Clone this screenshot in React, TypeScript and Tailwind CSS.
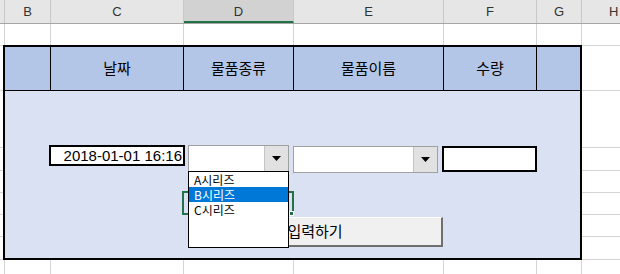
const cols = [
  { key: 'A', w: 'w-[5px]' },
  { key: 'B', w: 'w-[46px]' },
  { key: 'C', w: 'w-[133px]' },
  { key: 'D', w: 'w-[110px]' },
  { key: 'E', w: 'w-[150px]' },
  { key: 'F', w: 'w-[93px]' },
  { key: 'G', w: 'w-[45px]' },
];

const headCells = [
  { w: 'w-[46px]', label: '' },
  { w: 'w-[133px]', label: '날짜' },
  { w: 'w-[110px]', label: '물품종류' },
  { w: 'w-[150px]', label: '물품이름' },
  { w: 'w-[93px]', label: '수량' },
];

const sideRows = ['h-[57px]', 'h-[23px]', 'h-[22px]', 'h-[22px]', 'h-[22px]', 'h-[23px]'];

const KR = { fontFamily: '"Noto Sans CJK KR", "Liberation Sans", sans-serif' };

function Arrow() {
  return (
    <svg width="9" height="5" viewBox="0 0 9 5">
      <polygon points="0,0 9,0 4.5,5" fill="#000" />
    </svg>
  );
}

function Combo({ className }: { className: string }) {
  return (
    <div className={`absolute flex border border-[#a0a0a0] bg-white ${className}`}>
      <div className="flex-1" />
      <div className="w-[24px] bg-[#e1e1e1] border-l border-[#c4c4c4] flex items-center justify-center">
        <Arrow />
      </div>
    </div>
  );
}

function SideColumn({ w }: { w: string }) {
  return (
    <div className={`${w} flex flex-col`}>
      <div className="h-[46px] border-y border-[#d4d4d4]" />
      {sideRows.map((h, i) => (
        <div key={i} className={`${h} border-b border-[#d4d4d4]`} />
      ))}
    </div>
  );
}

export default function App() {
  return (
    <div className="relative w-[620px] h-[274px] overflow-hidden bg-white" style={{ fontFamily: '"Liberation Sans", sans-serif' }}>
      {/* column letters */}
      <div className="flex h-[24px] bg-[#e6e6e6] border-b border-[#a6a6a6] text-[13px] text-[#333]">
        {cols.map((c) => (
          <div
            key={c.key}
            className={`${c.w} shrink-0 flex items-center justify-center border-r border-[#c8c8c8] ${
              c.key === 'D' ? 'bg-[#d2d2d2] border-b-2 border-b-[#217346] pt-[2px]' : ''
            }`}
          >
            {c.key === 'A' ? '' : c.key}
          </div>
        ))}
        <div className="flex-1 pl-[27px] flex items-center">H</div>
      </div>

      {/* row 1 */}
      <div className="flex h-[21px]">
        {cols.map((c) => (
          <div key={c.key} className={`${c.w} shrink-0 border-r border-[#d4d4d4]`} />
        ))}
        <div className="flex-1" />
      </div>

      {/* table block */}
      <div className="flex">
        <SideColumn w="w-[3px]" />
        <div className="w-[579px] h-[215px] border-2 border-black flex flex-col">
          <div className="flex h-[44px] bg-[#b4c6e7] border-b border-black text-[15px] text-black" style={KR}>
            {headCells.map((h, i) => (
              <div key={i} className={`${h.w} shrink-0 border-r border-black flex items-center justify-center`}>
                {h.label}
              </div>
            ))}
            <div className="flex-1" />
          </div>
          <div className="flex-1 bg-[#d9e1f2]" />
        </div>
        <SideColumn w="flex-1" />
      </div>

      {/* row below */}
      <div className="flex h-[20px]">
        {cols.map((c) => (
          <div key={c.key} className={`${c.w} shrink-0 border-r border-[#d4d4d4]`} />
        ))}
        <div className="flex-1" />
      </div>

      {/* date box */}
      <div className="absolute left-[49px] top-[145px] w-[136px] h-[21px] border-2 border-black bg-white flex items-center justify-end text-[15px] leading-none text-black">
        <span className="pr-[1px] whitespace-pre">2018-01-01 16:16</span>
      </div>

      {/* cell selection */}
      <div className="absolute left-[182px] top-[191px] w-[112px] h-[24px] border-2 border-[#217346]" />
      <div className="absolute left-[289px] top-[211px] w-[5px] h-[5px] bg-[#217346] border border-white" />

      <Combo className="left-[188px] top-[145px] w-[101px] h-[27px]" />
      <Combo className="left-[293px] top-[146px] w-[145px] h-[27px]" />

      {/* quantity box */}
      <div className="absolute left-[442px] top-[146px] w-[95px] h-[26px] border-2 border-black bg-white" />

      {/* submit button */}
      <div
        className="absolute left-[188px] top-[217px] w-[255px] h-[30px] bg-[#f0f0f0] border-t border-l border-white border-r-2 border-b-2 border-r-[#6e6e6e] border-b-[#6e6e6e] flex items-center justify-center text-[15px] text-black"
        style={KR}
      >
        입력하기
      </div>

      {/* dropdown list */}
      <div className="absolute left-[188px] top-[171px] w-[101px] h-[77px] border border-black bg-white text-[12px] text-black" style={KR}>
        <div className="h-[15px] pl-[5px] flex items-center overflow-hidden leading-[13px]">A시리즈</div>
        <div className="h-[15px] pl-[5px] flex items-center overflow-hidden leading-[13px] bg-[#0078d7] text-white">B시리즈</div>
        <div className="h-[15px] pl-[5px] flex items-center overflow-hidden leading-[13px]">C시리즈</div>
      </div>
    </div>
  );
}
